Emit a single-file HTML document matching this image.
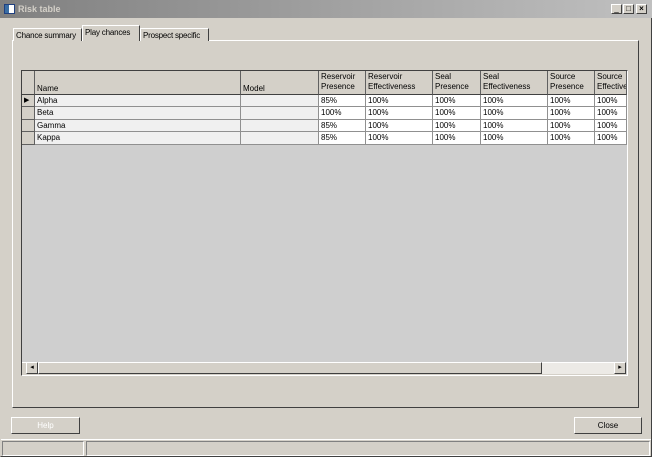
<!DOCTYPE html>
<html><head><style>
*{margin:0;padding:0;box-sizing:border-box}
body{width:652px;height:457px;background:#d4d0c8;font-family:"Liberation Sans",sans-serif;font-size:8px;color:#000;position:relative;overflow:hidden}
.a{position:absolute}
.title{left:0;top:0;width:652px;height:18px;background:linear-gradient(90deg,#808080,#c0c0c0);color:#d4d0c8;font-weight:bold;font-size:9px;line-height:18px;padding-left:18px}
.tb{width:11px;height:10px;top:4px;background:#d4d0c8;border:1px solid;border-color:#fff #404040 #404040 #fff;font-size:8px;line-height:8px;text-align:center;color:#000}
.raised{border:1px solid;border-color:#fff #404040 #404040 #fff}
.sunk{border:1px solid;border-color:#808080 #fff #fff #808080}
.tab{top:26px;font-size:8px;letter-spacing:-0.2px;line-height:13px;padding:0 2px;border:1px solid;border-bottom:none;border-color:#fff #404040 #404040 #fff;background:#d4d0c8;white-space:nowrap;overflow:hidden}
.c{position:absolute;overflow:hidden;white-space:nowrap;padding-left:2px;line-height:12px;border-right:1px solid #909090;border-bottom:1px solid #909090}
.h{background:#d4d0c8;line-height:10px;border-right:1px solid #606060;border-bottom:1px solid #404040}
</style></head><body>
<div class="a" style="left:0;top:0;width:652px;height:457px;border:1px solid;border-color:#d4d0c8 #404040 #404040 #d4d0c8"></div>
<div class="a title">Risk table</div>
<div class="a" style="left:4px;top:4px;width:11px;height:10px;background:#fff;border:1px solid #204080"><div style="width:4px;height:8px;background:#3a6ea5"></div></div>
<div class="a tb" style="left:611px">_</div>
<div class="a tb" style="left:623px">□</div>
<div class="a tb" style="left:636px;font-weight:bold">×</div>

<div class="a raised" style="left:12px;top:40px;width:627px;height:368px"></div>
<div class="a tab" style="left:13px;top:28px;height:13px;width:69px">Chance summary</div>
<div class="a tab" style="left:82px;top:25px;height:16px;width:58px;z-index:2">Play chances</div>
<div class="a tab" style="left:140px;top:28px;height:13px;width:69px">Prospect specific</div>

<div class="a" style="left:21px;top:70px;width:607px;height:306px;background:#cfcfcf;border:1px solid;border-color:#404040 #fff #fff #404040"></div>
<div id="g"></div>
<div class="a" style="left:22px;top:362px;width:604px;height:13px;background:#d4d0c8;border-top:1px solid #fff"></div>
<div class="a raised" style="left:26px;top:362px;width:12px;height:12px;font-size:7px;line-height:10px;text-align:center">◂</div>
<div class="a raised" style="left:38px;top:362px;width:504px;height:12px"></div>
<div class="a" style="left:542px;top:363px;width:72px;height:11px;background:#eceae6"></div>
<div class="a raised" style="left:614px;top:362px;width:12px;height:12px;font-size:7px;line-height:10px;text-align:center">▸</div>

<div class="a raised" style="left:11px;top:417px;width:69px;height:17px;color:#fff;text-align:center;line-height:15px">Help</div>
<div class="a raised" style="left:574px;top:417px;width:68px;height:17px;text-align:center;line-height:15px">Close</div>
<div class="a" style="left:1px;top:439px;width:650px;height:1px;background:#fff"></div>
<div class="a sunk" style="left:2px;top:441px;width:82px;height:15px"></div>
<div class="a sunk" style="left:86px;top:441px;width:564px;height:15px"></div>

<script>
var cols=[[22,13,''],[35,206,'Name'],[241,78,'Model'],[319,47,'Reservoir<br>Presence'],[366,67,'Reservoir<br>Effectiveness'],[433,48,'Seal<br>Presence'],[481,67,'Seal<br>Effectiveness'],[548,47,'Source<br>Presence'],[595,32,'Source<br>Effectiveness']];
var rows=[['Alpha','85%'],['Beta','100%'],['Gamma','85%'],['Kappa','85%']];
var tops=[95,107,120,132],hs=[12,13,12,13];
var h='';
cols.forEach(function(c,i){h+='<div class="c h" style="left:'+c[0]+'px;top:71px;width:'+c[1]+'px;height:24px;padding-top:'+(i<3?13:1)+'px">'+c[2]+'</div>';});
rows.forEach(function(r,j){var t=tops[j];
cols.forEach(function(c,i){var bg=i==0?'#d4d0c8':(i<3?'#f0f0f0':'#fff');var tx=i==0?(j==0?'▶':''):(i==1?r[0]:i==2?'':i==3?r[1]:'100%');
h+='<div class="c" style="left:'+c[0]+'px;top:'+t+'px;width:'+c[1]+'px;height:'+hs[j]+'px;line-height:'+(hs[j]-1)+'px;background:'+bg+(i==0?';border-color:#606060;font-size:7px':'')+'">'+tx+'</div>';});});
document.getElementById('g').innerHTML=h;
</script>
</body></html>
